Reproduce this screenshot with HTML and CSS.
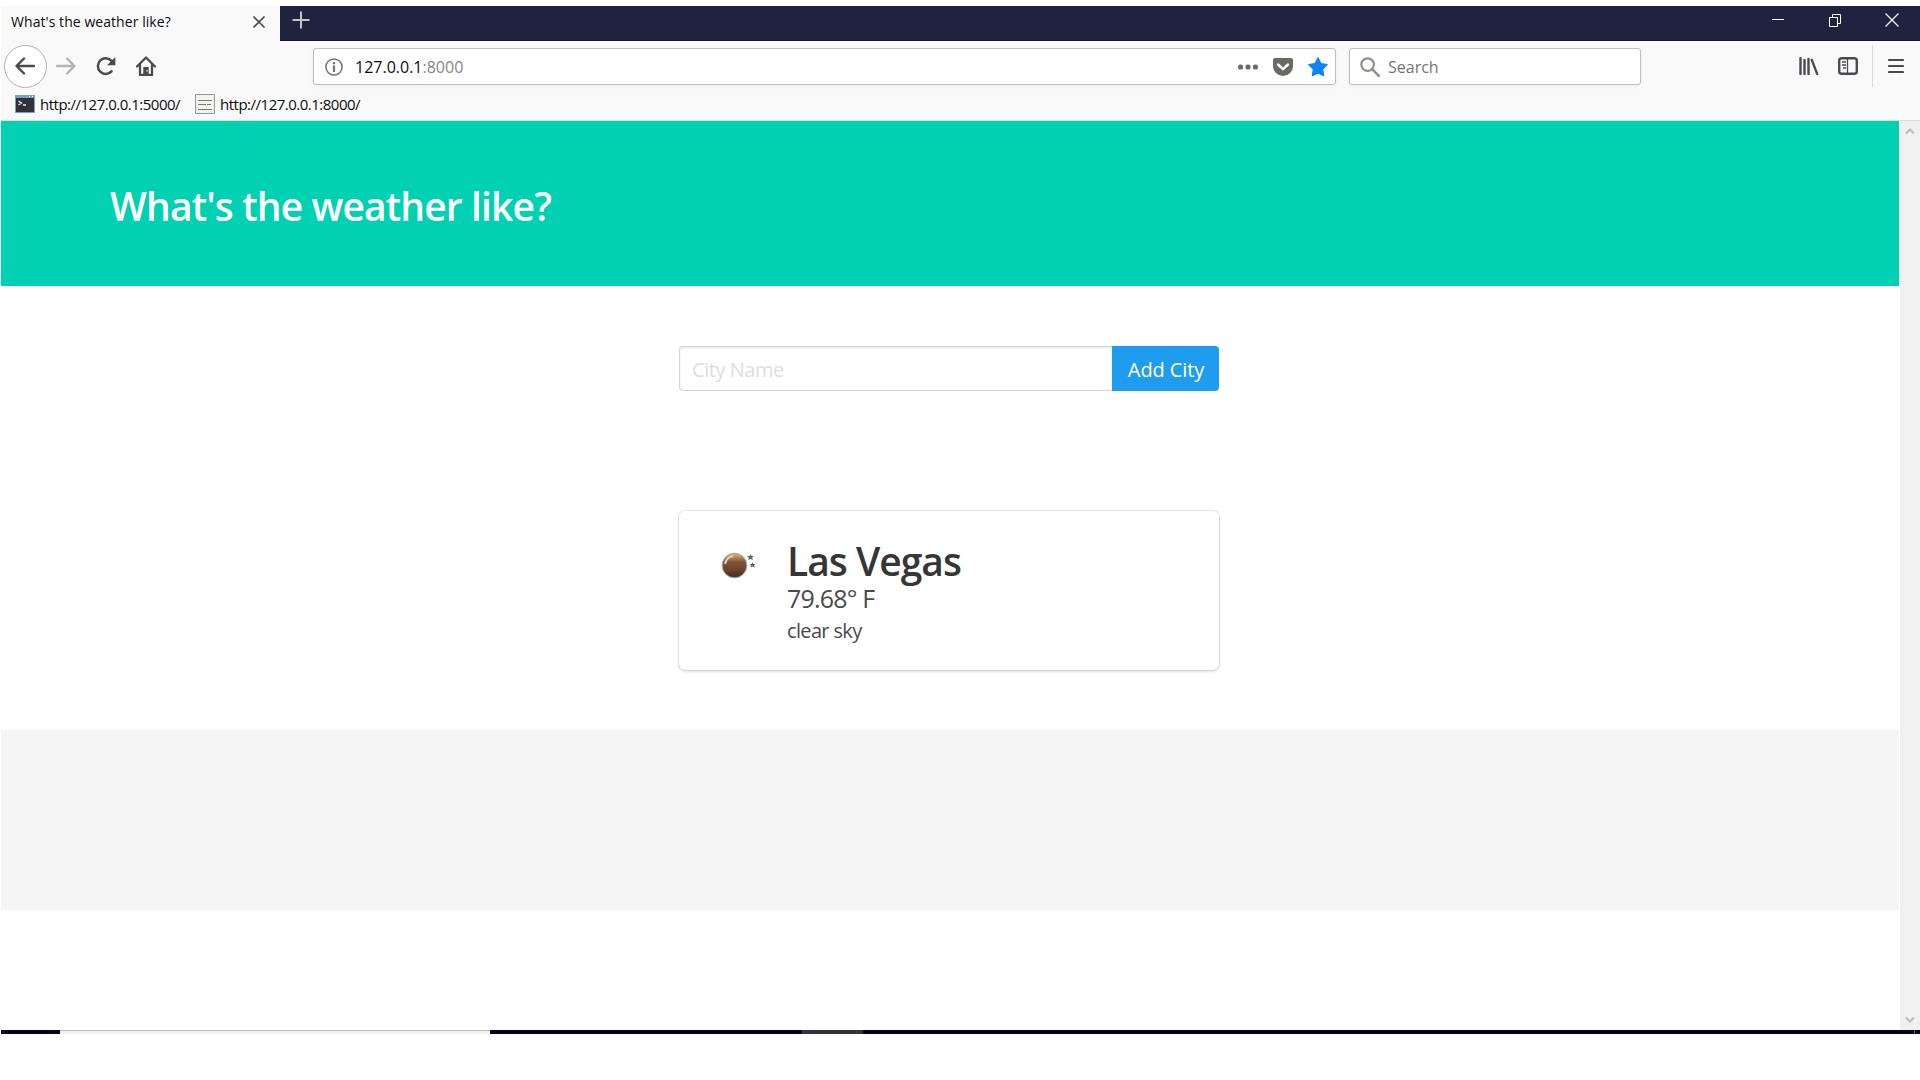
FILE: index.html
```html
<!DOCTYPE html>
<html lang="en">
<head>
<meta charset="utf-8">
<title>What's the weather like?</title>
<link rel="stylesheet" href="styles.css">
</head>
<body>
<div class="window">
  <header class="tabbar">
    <div class="tab">
      <span class="tab-title">What's the weather like?</span>
      <svg class="tab-close" width="14" height="14" viewBox="0 0 14 14"><path d="M1.5 1.5l11 11M12.5 1.5l-11 11" fill="none" stroke="#4a4a4f" stroke-width="1.7"/></svg>
    </div>
    <svg class="new-tab" width="18" height="18" viewBox="0 0 18 18"><path d="M9 0.5v17M0.5 9h17" fill="none" stroke="#c3c3c6" stroke-width="2"/></svg>
    <div class="window-controls">
      <svg width="14" height="14" viewBox="0 0 14 14"><path d="M1 6.5h12" stroke="#fff" fill="none"/></svg>
      <svg width="14" height="14" viewBox="0 0 14 14"><path d="M1.5 4.5h8v9h-8zM4.500 4.500v-3h8v9h-3" stroke="#fff" fill="none"/></svg>
      <svg width="14" height="14" viewBox="0 0 14 14"><path d="M.5.5l13 13M13.500.5l-13 13" stroke="#f3f3ee" stroke-width="1.300" fill="none"/></svg>
    </div>
  </header>

  <nav class="toolbar">
    <span class="back"><svg width="20" height="18" viewBox="0 0 20 18"><path d="M19 9H2M9 1.500L1.500 9 9 16.500" fill="none" stroke="#4a4a4f" stroke-width="2.400" stroke-linecap="round" stroke-linejoin="round"/></svg></span>
    <svg class="forward" width="20" height="18" viewBox="0 0 20 18"><path d="M1 9h17M11 1.500L18.500 9 11 16.500" fill="none" stroke="#b4b4b6" stroke-width="2.400" stroke-linecap="round" stroke-linejoin="round"/></svg>
    <svg class="reload" width="20" height="20" viewBox="0 0 20 20"><path d="M15.500 15.300A7.800 7.800 0 1 1 15.600 5" fill="none" stroke="#4a4a4f" stroke-width="2.500" stroke-linecap="round"/><path d="M19.300 1v8.300H11z" fill="#4a4a4f"/></svg>
    <svg class="home" width="20" height="20" viewBox="0 0 20 20"><path d="M1 10.500L10 1.500l9 9M4 9v10h12V9" fill="none" stroke="#4a4a4f" stroke-width="2.300" stroke-linecap="round" stroke-linejoin="round"/><path d="M7.300 11h5.400v8H7.300z" fill="#4a4a4f"/><path d="M10.500 14h1.200v1.500h-1.200z" fill="#f9f9fa"/></svg>
    <div class="field url">
      <svg class="info" width="18" height="18" viewBox="0 0 18 18"><circle cx="9" cy="9" r="8.100" fill="none" stroke="#737373" stroke-width="1.500"/><path d="M9 4v2.300M9 7.600V14" stroke="#737373" stroke-width="2.200"/></svg>
      <span class="host">127.0.0.1</span><span class="port">:8000</span>
      <div class="url-actions">
        <svg width="20" height="6" viewBox="0 0 20 6"><g fill="#6b6b6b"><circle cx="2.600" cy="3" r="2.600"/><circle cx="10" cy="3" r="2.600"/><circle cx="17.400" cy="3" r="2.600"/></g></svg>
        <svg width="20" height="18" viewBox="0 0 20 18"><path d="M2 0h16a2 2 0 0 1 2 2v6A10 10 0 0 1 0 8V2a2 2 0 0 1 2-2z" fill="#6a6965"/><path d="M5 6.500l5 4.700 5-4.700" fill="none" stroke="#fff" stroke-width="2.500" stroke-linecap="round" stroke-linejoin="round"/></svg>
        <svg width="20" height="20" viewBox="0 0 20 20"><path d="M10 .8l2.900 5.700 6.300 1-4.500 4.600.9 6.600L10 15.900l-5.600 2.800.9-6.600L.8 7.500l6.300-1z" fill="#0a84ff" stroke="#0a84ff" stroke-width="1.200" stroke-linejoin="round"/></svg>
      </div>
    </div>
    <div class="field search">
      <svg width="20" height="20" viewBox="0 0 20 20"><circle cx="7.600" cy="7.600" r="6.300" fill="none" stroke="#928f8b" stroke-width="2.200"/><path d="M12.300 12.300l6.500 6.500" stroke="#928f8b" stroke-width="2.600" stroke-linecap="round"/></svg>
      <span class="search-hint">Search</span>
    </div>
    <div class="tools">
      <svg class="library" width="20" height="18" viewBox="0 0 20 18"><path d="M1.500 1v16M5.500 3v14M9.500 2v15" stroke="#4a4a4f" stroke-width="2.400" stroke-linecap="round"/><path d="M12.700 2.700L18.200 17" stroke="#4a4a4f" stroke-width="2.300" stroke-linecap="round"/></svg>
      <svg class="sidebar" width="20" height="18" viewBox="0 0 20 18"><rect x="1.200" y="1.200" width="17.600" height="15.600" rx="2.500" fill="none" stroke="#4a4a4f" stroke-width="2.400"/><path d="M9.500 1v16M4 5h4M4 8h4M5 11h3" stroke="#4a4a4f" stroke-width="1.300"/></svg>
      <svg class="menu" width="16" height="16" viewBox="0 0 16 16"><path d="M1 2h14M1 8h14M1 14h14" stroke="#4a4a4f" stroke-width="2.200" stroke-linecap="round"/></svg>
    </div>
  </nav>

  <div class="bookmarks">
    <svg width="20" height="18" viewBox="0 0 20 18"><path d="M0 0h20v18H0z" fill="#769fd5"/><path d="M1 3h18v14H1z" fill="#303238"/><path d="M3.500 6l3 2-3 2M8 10h3" fill="none" stroke="#eee" stroke-width="1.300"/><path d="M14 1.500h1M17 1.500h1" stroke="#fff"/></svg>
    <span class="mark first">http://127.0.0.1:5000/</span>
    <svg width="20" height="20" viewBox="0 0 20 20"><path d="M.5.5h19v19H.5z" fill="#f2f2ef" stroke="#999"/><path d="M3 6.500h14M3 10.500h8M12 10.500h4M3 15.500h14" stroke="#777b75" stroke-width="1.200"/></svg>
    <span class="mark">http://127.0.0.1:8000/</span>
  </div>

  <div class="viewport">
    <main class="page">
      <section class="hero"><h1 class="title">What's the weather like?</h1></section>
      <section class="content">
        <form class="city-form">
          <div class="city-input"><span class="hint">City Name</span></div>
          <div class="add"><span class="add-label">Add City</span></div>
        </form>
        <article class="card">
          <svg class="weather" width="36" height="28" viewBox="0 0 36 28">
            <defs><linearGradient id="moon" x1="0" y1="0" x2="0" y2="1"><stop offset="0" stop-color="#e6b56a"/><stop offset=".38" stop-color="#7b5139"/><stop offset=".68" stop-color="#6d432f"/><stop offset="1" stop-color="#3f2b27"/></linearGradient></defs>
            <circle cx="13.500" cy="14.500" r="12.300" fill="url(#moon)" stroke="#aaa29c"/>
            <path d="M4 13a10 10 0 0 1 8-8" fill="none" stroke="#ddd3cb" stroke-width="2"/>
            <path d="M29.500 3l1 2h2.300l-1.600 1.600.6 2.400-2.300-1.200L27.200 9l.6-2.400L26.200 5h2.300zM31.500 11.300l.9 1.700h2.100l-1.500 1.400.6 2.100-2.100-1-2.100 1 .6-2.100-1.500-1.400h2.100z" fill="#6b5f5c"/>
          </svg>
          <div class="details">
            <strong class="city">Las Vegas</strong>
            <span class="temp">79.68° F</span>
            <span class="sky">clear sky</span>
          </div>
        </article>
      </section>
      <footer class="footer"></footer>
    </main>
    <aside class="scrollbar">
      <svg width="10" height="8" viewBox="0 0 10 8"><path d="M1 6.500l4-4 4 4" fill="none" stroke="#bcbcbc" stroke-width="2.200"/></svg>
      <svg width="10" height="8" viewBox="0 0 10 8"><path d="M1 1.500l4 4 4-4" fill="none" stroke="#bcbcbc" stroke-width="2.200"/></svg>
    </aside>
  </div>
  <div class="taskbar"><i class="task-search"></i><i class="task-active"></i><i class="task-edge"></i></div>
</div>
</body>
</html>
```
FILE: styles.css
```css
* { box-sizing: border-box; }
body { margin: 0; background: #fff; font-family: "Open Sans", "Noto Sans", sans-serif; overflow: hidden; }
svg { display: block; flex: none; }
.window { height: 1034px; padding: 6px 0 0 1px; display: flex; flex-direction: column; }
.tabbar { height: 35px; flex: none; display: flex; background: #202340; border-bottom: 1px solid #15152d; }
.tab { width: 279px; height: 35px; padding: 0 14px 4px 10px; display: flex; align-items: center; justify-content: space-between; background: #f9f9fa; }
.tab-title { font-size: 14px; letter-spacing: .06px; color: #0c0c0d; white-space: nowrap; }
.new-tab { margin: 5px 0 0 12px; }
.window-controls { margin: 7px 21px 0 auto; display: flex; gap: 43px; }
.toolbar { height: 50px; flex: none; display: flex; align-items: center; background: #f9f9fa; }
.back { width: 43px; height: 43px; margin-left: 3px; padding-right: 2px; border: 1px solid #b1b1b3; border-radius: 50%; background: #fff; display: flex; align-items: center; justify-content: center; flex: none; }
.forward { margin-left: 9px; }
.reload { margin-left: 20px; }
.home { margin-left: 20px; }
.field { height: 37px; margin-top: 1px; border: 1px solid #bdbdbd; border-radius: 3px; background: #fff; display: flex; align-items: center; font-size: 16px; box-shadow: 0 1px 4px rgba(0,0,0,.05); }
.url { width: 1023px; margin-left: 157px; padding: 0 7px 0 11px; }
.host { margin-left: 12px; padding-top: 1px; color: #0c0c0d; }
.port { padding-top: 1px; color: #858585; }
.url-actions { margin-left: auto; display: flex; align-items: center; gap: 15px; }
.search { width: 292px; margin-left: 13px; padding-left: 10px; }
.search-hint { margin-left: 8px; padding-top: 1px; color: #757575; }
.tools { margin-left: auto; padding-right: 16px; display: flex; align-items: center; }
.sidebar { margin: 0 14px 0 19px; }
.tools .menu { box-sizing: content-box; padding: 13px 0 13px 15px; border-left: 1px solid #d9d9db; }
.bookmarks { height: 30px; flex: none; padding: 0 0 4px 14px; display: flex; align-items: center; background: #f9f9fa; border-bottom: 1px solid #dcdcdc; font-size: 15px; letter-spacing: -.5px; color: #0c0c0d; }
.mark { margin-left: 5px; padding-top: 1px; }
.mark.first { margin-right: 15px; }
.viewport { height: 909px; flex: none; display: flex; }
.page { width: 1898px; }
.hero { height: 165px; padding-left: 109px; display: flex; align-items: center; background: #00d1b2; }
.title { margin: 0; font-size: 39px; font-weight: 600; line-height: 50px; letter-spacing: -.87px; color: #fff; white-space: nowrap; padding-top: 4px; }
.content { height: 444px; padding: 60px 0 0 678px; }
.city-form { display: flex; width: 540px; height: 45px; }
.city-input { flex: 1; padding: 2px 0 0 12px; border: 1px solid #d6d6d6; border-right: 0; border-radius: 4px 0 0 4px; box-shadow: inset 0 1px 2px rgba(10,10,10,.1); display: flex; align-items: center; }
.hint { font-size: 20px; letter-spacing: -.45px; color: #dededc; }
.add { width: 107px; padding: 2px 0 0 1px; border-radius: 0 4px 4px 0; background: #209cee; color: #fff; font-size: 20px; letter-spacing: -.1px; display: flex; align-items: center; justify-content: center; white-space: nowrap; }
.card { width: 540px; height: 159px; margin-top: 120px; padding: 29px 30px; display: flex; border-radius: 6px; box-shadow: 0 2px 3px rgba(10,10,10,.1), 0 0 0 1px rgba(10,10,10,.1); }
.weather { margin: 11px 0 0 12px; }
.details { margin-left: 30px; display: flex; flex-direction: column; align-items: flex-start; color: #4a4a4a; }
.city { font-size: 39px; font-weight: 600; line-height: 42px; letter-spacing: -1px; color: #363636; }
.temp { font-size: 25px; line-height: 32px; letter-spacing: -.8px; }
.sky { font-size: 20px; line-height: 33px; letter-spacing: -.65px; }
.footer { height: 180px; background: #f5f5f5; }
.scrollbar { width: 20px; margin-left: 1px; padding: 6px 5px; background: #f0f0f0; display: flex; flex-direction: column; justify-content: space-between; }
.taskbar { height: 4px; flex: none; background: #060616; display: flex; }
.task-search { width: 430px; margin-left: 59px; background: #f2f2f2; border-top: 1px solid #bbb; }
.task-active { width: 61px; margin-left: 312px; background: #343337; }
.task-edge { width: 1px; margin-left: auto; margin-right: 5px; background: #66666e; }
```
